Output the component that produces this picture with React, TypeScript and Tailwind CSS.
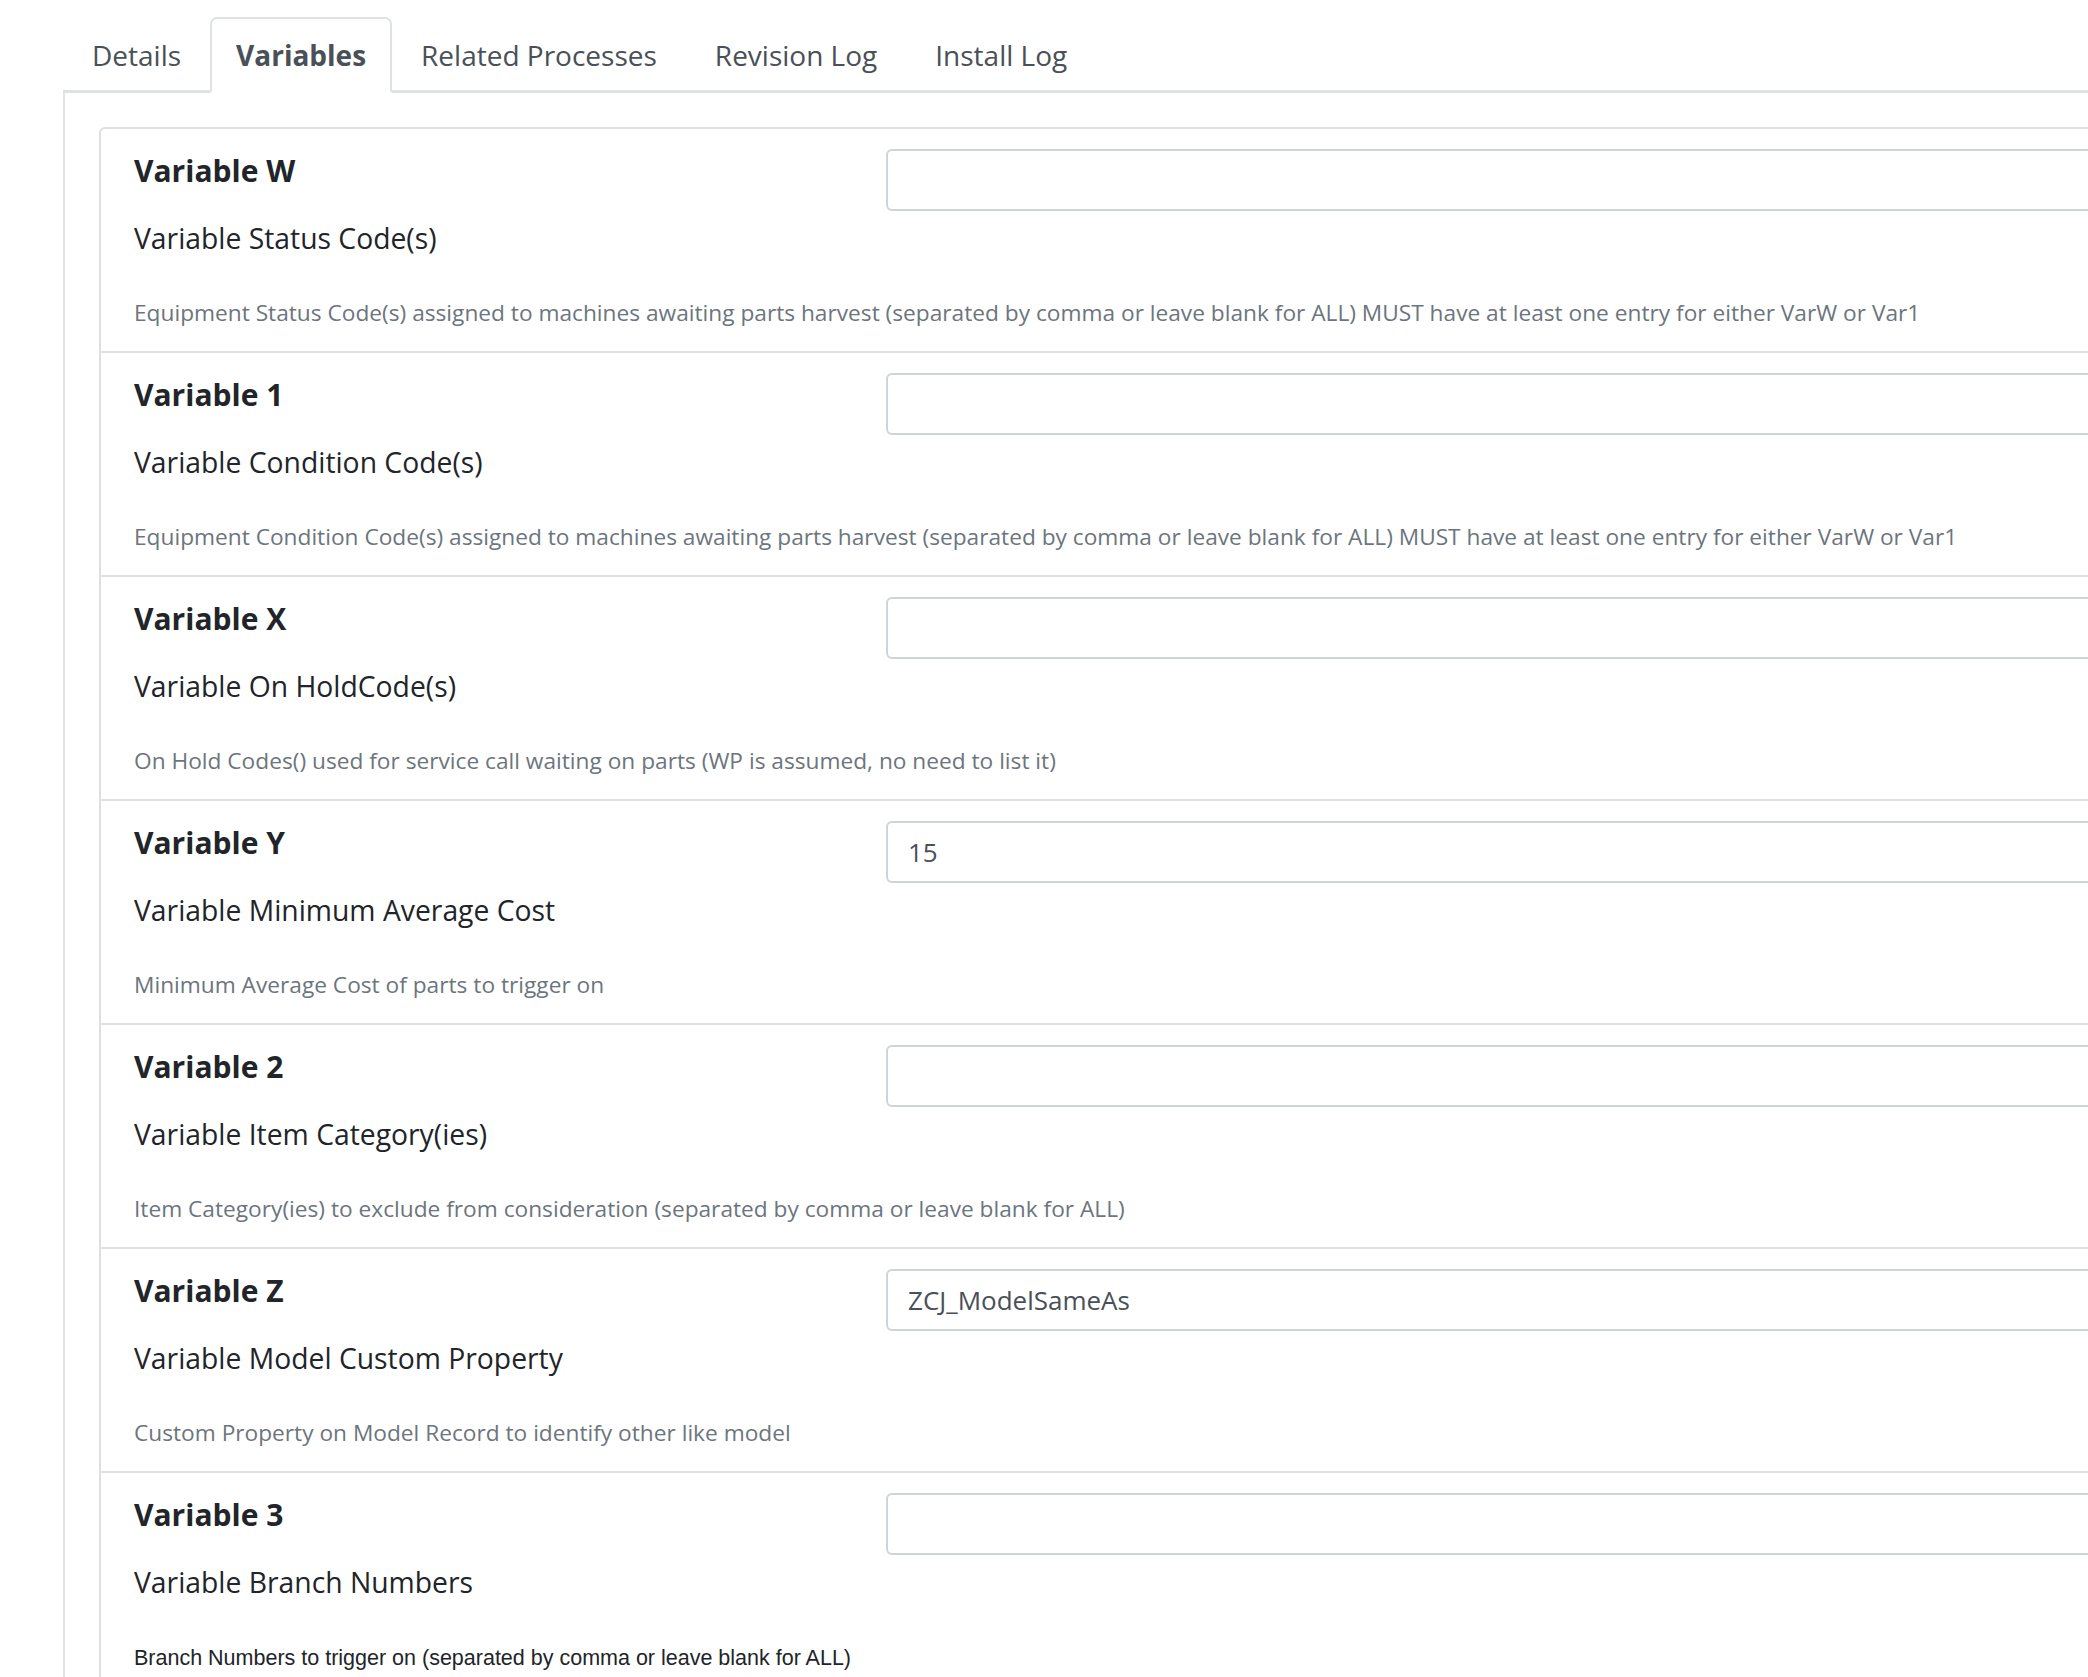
import React from "react";

type Row = { name: string; label: string; desc: string; value: string; arial?: boolean };

const rows: Row[] = [
  {
    name: "Variable W",
    label: "Variable Status Code(s)",
    desc: "Equipment Status Code(s) assigned to machines awaiting parts harvest (separated by comma or leave blank for ALL) MUST have at least one entry for either VarW or Var1",
    value: "",
  },
  {
    name: "Variable 1",
    label: "Variable Condition Code(s)",
    desc: "Equipment Condition Code(s) assigned to machines awaiting parts harvest (separated by comma or leave blank for ALL) MUST have at least one entry for either VarW or Var1",
    value: "",
  },
  {
    name: "Variable X",
    label: "Variable On HoldCode(s)",
    desc: "On Hold Codes() used for service call waiting on parts (WP is assumed, no need to list it)",
    value: "",
  },
  {
    name: "Variable Y",
    label: "Variable Minimum Average Cost",
    desc: "Minimum Average Cost of parts to trigger on",
    value: "15",
  },
  {
    name: "Variable 2",
    label: "Variable Item Category(ies)",
    desc: "Item Category(ies) to exclude from consideration (separated by comma or leave blank for ALL)",
    value: "",
  },
  {
    name: "Variable Z",
    label: "Variable Model Custom Property",
    desc: "Custom Property on Model Record to identify other like model",
    value: "ZCJ_ModelSameAs",
  },
  {
    name: "Variable 3",
    label: "Variable Branch Numbers",
    desc: "Branch Numbers to trigger on (separated by comma or leave blank for ALL)",
    value: "",
    arial: true,
  },
];

const tabs = ["Details", "Variables", "Related Processes", "Revision Log", "Install Log"];

function VarRow({ r, last }: { r: Row; last: boolean }) {
  return (
    <div className={last ? "pl-[33px] pb-[22px]" : "pl-[33px] pb-[22px] border-b-2 border-[#dfe1e4]"}>
      <div className="flex">
        <div className="w-[752px] shrink-0 pt-[22px]">
          <div className="text-[30px] leading-[40px] font-bold text-[#212529]">{r.name}</div>
          <div className="mt-[27px] text-[28.3px] leading-[40px] text-[#212529]">{r.label}</div>
        </div>
        <div className="flex-1 pt-[20px]">
          <div className="h-[62px] w-full rounded-[6px] border-2 border-[#ced4da] bg-white pl-[20px] text-[26px] leading-[58px] text-[#495057]">
            {r.value}
          </div>
        </div>
      </div>
      {r.arial ? (
        <div
          className="mt-[40px] text-[21.5px] leading-[32px] text-[#212529]"
          style={{ fontFamily: "'Liberation Sans', Arial, sans-serif" }}
        >
          {r.desc}
        </div>
      ) : (
        <div className="mt-[39px] text-[22.7px] leading-[32px] text-[#6c757d]">{r.desc}</div>
      )}
    </div>
  );
}

export default function App() {
  return (
    <div
      className="w-[2088px] h-[1677px] overflow-hidden bg-white"
      style={{ fontFamily: "'Open Sans', 'Noto Sans', sans-serif" }}
    >
      <div className="w-[2500px] pl-[63px]">
        <div className="flex pt-[17px] border-b-[3px] border-[#dee2e6]">
          {tabs.map((t) =>
            t === "Variables" ? (
              <div
                key={t}
                className="-mb-[3px] rounded-t-[7px] border-2 border-[#dee2e6] border-b-white bg-white px-[24px] pt-[16px] pb-[16px] text-[28px] leading-[40px] font-bold text-[#495057]"
              >
                {t}
              </div>
            ) : (
              <div
                key={t}
                className="-mb-[3px] border-2 border-transparent px-[27px] pt-[16px] pb-[16px] text-[28px] leading-[40px] text-[#495057]"
              >
                {t}
              </div>
            )
          )}
        </div>
        <div className="rounded-b-[6px] border-2 border-t-0 border-[#e3e3e3] pt-[34px] pl-[34px]">
          <div className="rounded-t-[6px] border-2 border-b-0 border-[#dfdfdf]">
            {rows.map((r, i) => (
              <VarRow key={r.name} r={r} last={i === rows.length - 1} />
            ))}
          </div>
        </div>
      </div>
    </div>
  );
}
